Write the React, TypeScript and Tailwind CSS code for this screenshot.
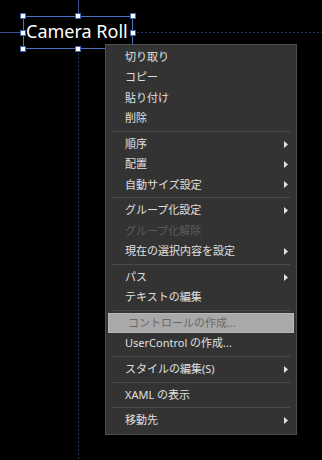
import React from "react";

type MenuEntry =
  | { kind: "sep" }
  | { kind: "item"; label: string; sub?: boolean; disabled?: boolean; active?: boolean };

const item = (label: string, opts: { sub?: boolean; disabled?: boolean; active?: boolean } = {}): MenuEntry => ({
  kind: "item",
  label,
  ...opts,
});
const sep: MenuEntry = { kind: "sep" };

const entries: MenuEntry[] = [
  item("切り取り"),
  item("コピー"),
  item("貼り付け"),
  item("削除"),
  sep,
  item("順序", { sub: true }),
  item("配置", { sub: true }),
  item("自動サイズ設定", { sub: true }),
  sep,
  item("グループ化設定", { sub: true }),
  item("グループ化解除", { disabled: true }),
  item("現在の選択内容を設定", { sub: true }),
  sep,
  item("パス", { sub: true }),
  item("テキストの編集"),
  sep,
  item("コントロールの作成...", { active: true }),
  item("UserControl の作成..."),
  sep,
  item("スタイルの編集(S)", { sub: true }),
  sep,
  item("XAML の表示"),
  sep,
  item("移動先", { sub: true }),
];

function Arrow() {
  return (
    <svg width="4" height="7" viewBox="0 0 4 7" className="ml-auto mr-[8px]">
      <path d="M0 0L4 3.5L0 7Z" fill="#e2e2e2" />
    </svg>
  );
}

function Handle() {
  return <div className="w-[6px] h-[6px] bg-white border border-[#3d64b0]" />;
}

export default function App() {
  return (
    <div className="relative w-[322px] h-[460px] bg-black overflow-hidden">
      {/* guide lines */}
      <div className="absolute left-0 top-[32px] w-[23px] h-px bg-[#34518c]" />
      <div className="absolute left-[133px] top-[32px] w-[189px] h-px bg-[linear-gradient(to_right,#213863_50%,transparent_50%)] bg-[length:4px_1px]" />
      <div className="absolute left-[78px] top-0 w-px h-[16px] bg-[#34518c]" />
      <div className="absolute left-[78px] top-[49px] w-px h-[411px] bg-[linear-gradient(to_bottom,#213863_50%,transparent_50%)] bg-[length:1px_4px]" />

      {/* selected element */}
      <div className="absolute left-[23px] top-[16px] w-[110px] h-[33px] border border-[#4a72c0] pl-[2px] pt-[3px]">
        <span className="block text-[18px] leading-[23px] text-white font-['Noto_Sans',sans-serif]">
          Camera Roll
        </span>
        {/* resize handles */}
        <div className="absolute -inset-[4px] flex flex-col justify-between">
          <div className="flex justify-between">
            <Handle />
            <Handle />
            <Handle />
          </div>
          <div className="flex justify-between">
            <Handle />
            <Handle />
          </div>
          <div className="flex justify-between">
            <Handle />
            <Handle />
            <Handle />
          </div>
        </div>
      </div>

      {/* context menu */}
      <div className="absolute left-[105px] top-[44px] w-[192px] h-[391px] bg-[#333333] border border-[#4e4e4e] pt-[2px] pb-[3px] flex flex-col font-['Noto_Sans','Noto_Sans_CJK_JP',sans-serif] text-[11px]">
        {entries.map((e, i) =>
          e.kind === "sep" ? (
            <div key={i} className="h-[5.4px] flex items-center px-[6px]">
              <div className="h-px w-full bg-[#4a4a4a]" />
            </div>
          ) : (
            <div
              key={i}
              className={`h-[20.5px] flex items-center pl-[19px] ${
                e.active ? "mx-[2px] pl-[17px] bg-[#a9a9a9] border border-[#b8b8b8] text-[#6a6a6a]" : ""
              } ${e.disabled ? "text-[#5c5c5c]" : e.active ? "" : "text-[#e0e0e0]"}`}
            >
              {e.label}
              {e.sub && <Arrow />}
            </div>
          )
        )}
      </div>
    </div>
  );
}
